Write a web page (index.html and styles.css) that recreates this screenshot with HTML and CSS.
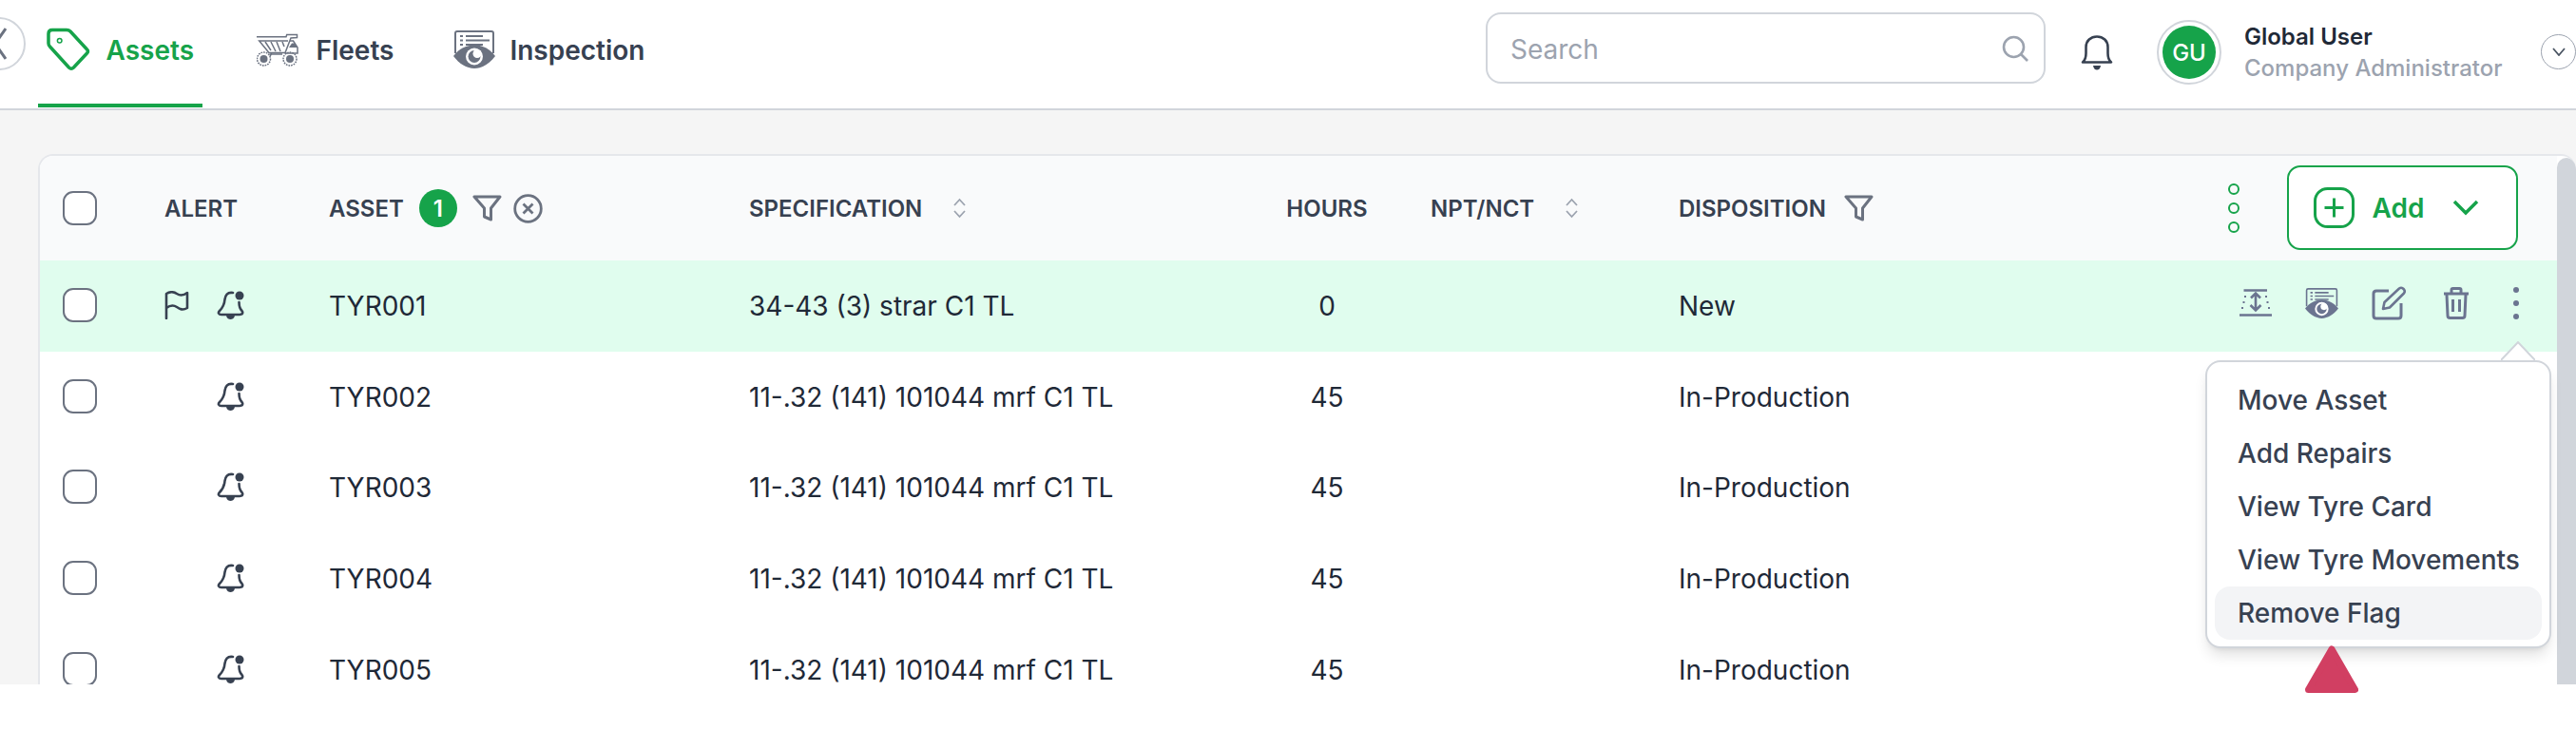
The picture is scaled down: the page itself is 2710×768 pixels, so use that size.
FILE: index.html
```html
<!DOCTYPE html>
<html lang="en">
<head>
<meta charset="utf-8">
<title>Assets</title>
<link rel="stylesheet" href="styles.css">
</head>
<body>
<svg class="defs" width="0" height="0" aria-hidden="true">
  <symbol id="inspect" viewBox="0 0 44 40">
    <path d="M2 24V3a2 2 0 0 1 2-2h36a2 2 0 0 1 2 2v21" fill="none" stroke="currentColor" stroke-width="2"/>
    <path d="M7 6h3M13 6h18M7 10.500h3M13 10.500h25M7 15h3M13 15h18" fill="none" stroke="currentColor" stroke-width="2"/>
    <path d="M0 27C6 19 14 15.500 22 15.500S38 19 44 27C38 35 30 40 22 40S6 35 0 27Z" fill="currentColor"/>
    <circle cx="22" cy="27.500" r="9" fill="#fff"/>
    <circle cx="22" cy="27.500" r="6.500" fill="currentColor"/>
    <circle cx="25" cy="24.500" r="4.500" fill="#fff"/>
  </symbol>
  <symbol id="filter" viewBox="0 0 31 28">
    <path d="M2 2H29L19.500 14V26L12.500 23V14Z" fill="none" stroke="currentColor" stroke-width="3" stroke-linejoin="round"/>
  </symbol>
  <symbol id="sort" viewBox="0 0 15 22">
    <path d="M2 8 7.500 2 13 8M2 14 7.500 20 13 14" fill="none" stroke="currentColor" stroke-width="1.800"/>
  </symbol>
  <symbol id="bell" viewBox="0 0 29 30">
    <path d="M17 2C11 1 9 5 8.500 9C8 15 6 18 3 21C1 23 2 25 5 25H24C27 25 28 23 26.500 21C24.500 19 23.500 17 23.500 12" fill="none" stroke="currentColor" stroke-width="2.600" stroke-linecap="round"/>
    <path d="M10 26H19C18.500 29 16 30 14.500 30S10.500 29 10 26Z" fill="currentColor"/>
    <circle cx="24" cy="5" r="4.500" fill="currentColor"/>
  </symbol>
</svg>

<header class="topbar">
  <button class="collapse" type="button" aria-label="Collapse">
    <svg class="collapse-x" viewBox="0 0 24 34"><path d="M1 1 23 33M23 1 1 33" fill="none" stroke="currentColor" stroke-width="3"/></svg>
  </button>
  <nav class="tabs">
    <a class="tab tab-active">
      <svg class="ico-tag" viewBox="0 0 48 48"><path d="M7 3.500H22Q24.500 3.500 26 5L43.500 24Q45.500 26 43.500 28L29.500 43Q27 45.500 24.500 43L4.500 21Q3 19.500 3 17.500V7.500Q3 3.500 7 3.500Z" fill="none" stroke="currentColor" stroke-width="3.500"/><circle cx="14.700" cy="14.700" r="2.300" fill="none" stroke="currentColor" stroke-width="1.500"/></svg>
      <span class="tab-label">Assets</span>
    </a>
    <a class="tab tab-fleets">
      <svg class="ico-truck" viewBox="0 0 44 35">
        <g fill="none" stroke="currentColor" stroke-width="1.500">
          <path d="M0 3.700 31 3.700 31.700 1.500H42.500V4.500L36 5 30 20.500H13L2.700 8H33"/>
          <path d="M9 9 15 18M15 9 20 19M21 9 25 19M27 9 29 14"/>
          <path d="M35 8H38.500L43 15V21H30"/>
          <path d="M13.500 22H27M16 21 14 24"/>
          <circle cx="7.500" cy="27" r="7" stroke-dasharray="1.700 1"/>
          <circle cx="35" cy="27" r="7" stroke-dasharray="1.700 1"/>
        </g>
        <path d="M34 15 37 10.500H39.500L43 15Z" fill="currentColor"/>
        <circle cx="7.500" cy="27" r="4" fill="currentColor"/>
        <circle cx="35" cy="27" r="4" fill="currentColor"/>
      </svg>
      <span class="tab-label">Fleets</span>
    </a>
    <a class="tab tab-inspect">
      <svg class="ico-inspect"><use href="#inspect"/></svg>
      <span class="tab-label">Inspection</span>
    </a>
  </nav>
  <div class="search">
    <span class="search-text">Search</span>
    <svg class="ico-search" viewBox="0 0 28 28"><circle cx="12.500" cy="12.500" r="10.500" fill="none" stroke="currentColor" stroke-width="2.600"/><path d="M20 20 27 27" fill="none" stroke="currentColor" stroke-width="2.600"/></svg>
  </div>
  <svg class="ico-bell" viewBox="0 0 34 37"><path d="M2 28.500C5 26 5.500 23 5.500 19V12.500C5.500 6 10.500 1.500 17 1.500S28.500 6 28.500 12.500V19C28.500 23 29 26 32 28.500Z" fill="none" stroke="currentColor" stroke-width="2.600" stroke-linejoin="round"/><path d="M13 32H21C20.500 35 19 36.500 17 36.500S13.500 35 13 32Z" fill="currentColor"/></svg>
  <div class="avatar"><span class="avatar-in">GU</span></div>
  <div class="user">
    <div class="user-name">Global User</div>
    <div class="user-role">Company Administrator</div>
  </div>
  <button class="user-menu" type="button" aria-label="User menu">
    <svg class="user-chev" viewBox="0 0 14 9"><path d="M1 1 7 8 13 1" fill="none" stroke="currentColor" stroke-width="1.800"/></svg>
  </button>
</header>

<main class="page">
  <section class="card">
    <div class="table">
      <div class="row row-head">
        <div class="cell cell-check"><span class="check"></span></div>
        <div class="cell">ALERT</div>
        <div class="cell gap-asset">
          <span>ASSET</span>
          <span class="badge">1</span>
          <svg class="ico-filter"><use href="#filter"/></svg>
          <svg class="ico-clear" viewBox="0 0 31 31"><circle cx="15.500" cy="15.500" r="13.800" fill="none" stroke="currentColor" stroke-width="2.800"/><path d="M10.500 10.500 20.500 20.500M20.500 10.500 10.500 20.500" fill="none" stroke="currentColor" stroke-width="2.800"/></svg>
        </div>
        <div class="cell gap-sort"><span>SPECIFICATION</span><svg class="ico-sort"><use href="#sort"/></svg></div>
        <div class="cell cell-center">HOURS</div>
        <div class="cell cell-npt gap-sort"><span>NPT/NCT</span><svg class="ico-sort"><use href="#sort"/></svg></div>
        <div class="cell gap-disp"><span>DISPOSITION</span><svg class="ico-filter"><use href="#filter"/></svg></div>
        <div class="cell cell-head-actions">
          <svg class="ico-dots" viewBox="0 0 14 52"><g fill="none" stroke="currentColor" stroke-width="2"><circle cx="7" cy="6" r="5"/><circle cx="7" cy="26" r="5"/><circle cx="7" cy="46" r="5"/></g></svg>
          <button class="add" type="button">
            <svg class="ico-plus" viewBox="0 0 43 43"><rect x="1.500" y="1.500" width="40" height="40" rx="13" fill="none" stroke="currentColor" stroke-width="3"/><path d="M21.500 11.500V31.500M11.500 21.500H31.500" fill="none" stroke="currentColor" stroke-width="3"/></svg>
            <span>Add</span>
            <svg class="ico-chev" viewBox="0 0 28 17"><path d="M2 2 14 14 26 2" fill="none" stroke="currentColor" stroke-width="3.500"/></svg>
          </button>
        </div>
      </div>

      <div class="row row-body row-selected">
        <div class="cell cell-check"><span class="check"></span></div>
        <div class="cell cell-alert">
          <svg class="ico-flag" viewBox="0 0 26 30"><path d="M2 29V3C7 0 10 1 13 3S20 5 24 2V18C19 21 16 19 13 17S6 15 2 18" fill="none" stroke="currentColor" stroke-width="2.600" stroke-linecap="round" stroke-linejoin="round"/></svg>
          <svg class="ico-rowbell"><use href="#bell"/></svg>
        </div>
        <div class="cell">TYR001</div>
        <div class="cell">34-43 (3) strar C1 TL</div>
        <div class="cell cell-center">0</div>
        <div class="cell"></div>
        <div class="cell">New</div>
        <div class="cell cell-actions">
          <svg class="ico-move" viewBox="0 0 34 29">
            <path d="M4.500 1.500H29M0 27.500H34" fill="none" stroke="currentColor" stroke-width="2.600"/>
            <path d="M17 5V22M12 9.500 17 4.500 22 9.500M11.500 17 17 22.500 22.500 17" fill="none" stroke="currentColor" stroke-width="2.600"/>
            <path d="M5 8h2M3.500 14h2M2 20h2M27 8h2M28.500 14h2M30 20h2" fill="none" stroke="currentColor" stroke-width="2"/>
          </svg>
          <svg class="ico-eye"><use href="#inspect"/></svg>
          <svg class="ico-edit" viewBox="0 0 36 36"><path d="M18 5H5Q2 5 2 8V31Q2 34 5 34H28Q31 34 31 31V18" fill="none" stroke="currentColor" stroke-width="3"/><path d="M12 24 13.500 17 29 2.500Q31 1 33 2.500L34 3.500Q35.500 5.500 34 7.500L19 22.500Z" fill="none" stroke="currentColor" stroke-width="2.600" stroke-linejoin="round"/></svg>
          <svg class="ico-trash" viewBox="0 0 36 34"><path d="M5 7H31M8 8 9 30Q9 32.500 11.500 32.500H24.500Q27 32.500 27 30L28 8M13 7V3Q13 1.500 14.500 1.500H21.500Q23 1.500 23 3V7M14.500 13V26M21.500 13V26" fill="none" stroke="currentColor" stroke-width="3"/></svg>
          <svg class="ico-kebab" viewBox="0 0 20 34"><circle cx="10" cy="3" r="3" fill="currentColor"/><circle cx="10" cy="17" r="3" fill="currentColor"/><circle cx="10" cy="31" r="3" fill="currentColor"/></svg>
        </div>
      </div>

      <div class="row row-body">
        <div class="cell cell-check"><span class="check"></span></div>
        <div class="cell cell-alert cell-noflag"><svg class="ico-rowbell"><use href="#bell"/></svg></div>
        <div class="cell">TYR002</div>
        <div class="cell">11-.32 (141) 101044 mrf C1 TL</div>
        <div class="cell cell-center">45</div>
        <div class="cell"></div>
        <div class="cell">In-Production</div>
        <div class="cell"></div>
      </div>
      <div class="row row-body">
        <div class="cell cell-check"><span class="check"></span></div>
        <div class="cell cell-alert cell-noflag"><svg class="ico-rowbell"><use href="#bell"/></svg></div>
        <div class="cell">TYR003</div>
        <div class="cell">11-.32 (141) 101044 mrf C1 TL</div>
        <div class="cell cell-center">45</div>
        <div class="cell"></div>
        <div class="cell">In-Production</div>
        <div class="cell"></div>
      </div>
      <div class="row row-body">
        <div class="cell cell-check"><span class="check"></span></div>
        <div class="cell cell-alert cell-noflag"><svg class="ico-rowbell"><use href="#bell"/></svg></div>
        <div class="cell">TYR004</div>
        <div class="cell">11-.32 (141) 101044 mrf C1 TL</div>
        <div class="cell cell-center">45</div>
        <div class="cell"></div>
        <div class="cell">In-Production</div>
        <div class="cell"></div>
      </div>
      <div class="row row-body">
        <div class="cell cell-check"><span class="check"></span></div>
        <div class="cell cell-alert cell-noflag"><svg class="ico-rowbell"><use href="#bell"/></svg></div>
        <div class="cell">TYR005</div>
        <div class="cell">11-.32 (141) 101044 mrf C1 TL</div>
        <div class="cell cell-center">45</div>
        <div class="cell"></div>
        <div class="cell">In-Production</div>
        <div class="cell"></div>
      </div>
    </div>
    <div class="scrollbar"></div>

    <div class="menu">
      <svg class="menu-caret" viewBox="0 0 36 20"><path d="M0 20 18 1 36 20" fill="#fff" stroke="#d1d5db" stroke-width="2"/></svg>
      <div class="menu-item">Move Asset</div>
      <div class="menu-item">Add Repairs</div>
      <div class="menu-item">View Tyre Card</div>
      <div class="menu-item">View Tyre Movements</div>
      <div class="menu-item menu-item-hover">Remove Flag</div>
    </div>
  </section>
</main>

<svg class="pointer" viewBox="0 0 56 50"><path d="M28 4 52.500 46.500H3.500Z" fill="#d13f62" stroke="#d13f62" stroke-width="7" stroke-linejoin="round"/></svg>
</body>
</html>
```

FILE: styles.css
```css
* { box-sizing: border-box; }
html, body { margin: 0; padding: 0; height: 768px; background: #fff; overflow: hidden; }
body { position: relative; font-family: "Inter", "Liberation Sans", sans-serif; color: #1f2937; }
svg { display: block; flex: none; }
.defs { position: absolute; }
button { font: inherit; padding: 0; background: none; cursor: pointer; }

/* top bar */
.topbar { height: 116px; display: flex; align-items: flex-start; border-bottom: 2px solid #d1d5db; background: #fff; }
.collapse { width: 56px; height: 56px; margin: 18px 0 0 -29px; border: 2px solid #d1d5db; border-radius: 50%; background: #fff; display: flex; align-items: center; justify-content: center; color: #6b7280; flex: none; }
.collapse-x { width: 24px; height: 34px; margin-right: 8px; }
.tabs { display: flex; gap: 47px; margin-left: 13px; flex: 1; height: 113px; }
.tab { display: flex; align-items: center; gap: 15.500px; padding: 0 10px 5px; height: 113px; border-bottom: 4px solid transparent; font-size: 28px; font-weight: 600; color: #374151; }
.tab-label { margin-top: 2px; }
.tab-active { color: #16a34a; border-bottom-color: #16a34a; width: 173px; }
.tab-fleets { gap: 18.500px; }
.tab-inspect { gap: 15px; margin-left: -4px; }
.ico-tag { width: 48px; height: 48px; margin-left: -2px; }
.ico-truck { width: 44px; height: 35px; color: #6b7280; }
.ico-inspect { width: 44px; height: 40px; color: #6b7280; }
.search { width: 589px; height: 75px; margin-top: 13px; border: 2px solid #d1d5db; border-radius: 16px; display: flex; align-items: center; justify-content: space-between; padding: 0 16px 0 24px; color: #9ca3af; font-size: 28px; }
.search-text { margin-top: 2px; }
.ico-search { width: 28px; height: 28px; }
.ico-bell { width: 34px; height: 37px; margin: 37px 0 0 37px; color: #374151; }
.avatar { width: 68px; height: 68px; margin: 21px 0 0 46px; border: 2px solid #d1d5db; border-radius: 50%; display: flex; align-items: center; justify-content: center; flex: none; }
.avatar-in { width: 56px; height: 56px; border-radius: 50%; background: #16a34a; color: #fff; font-size: 24px; font-weight: 500; display: flex; align-items: center; justify-content: center; }
.user { margin: 22px 0 0 24px; width: 270px; font-size: 24px; line-height: 33px; white-space: nowrap; }
.user-name { font-weight: 600; color: #1f2937; }
.user-role { font-weight: 500; color: #9ca3af; }
.user-menu { width: 37px; height: 37px; margin: 36px 0 0 42px; border: 1.500px solid #9ca3af; border-radius: 50%; display: flex; align-items: center; justify-content: center; color: #4b5563; flex: none; }
.user-chev { width: 14px; height: 9px; }

/* page and table */
.page { height: 604px; padding: 46px 0 0 40px; background: #f5f5f5; overflow: hidden; }
.card { position: relative; display: flex; height: 600px; border: 2px solid #e5e7eb; border-width: 2px 0 0 2px; border-radius: 16px 16px 0 0; background: #fff; overflow: hidden; }
.table { flex: 1; min-width: 0; }
.scrollbar { width: 20px; flex: none; margin-top: 2px; background: #d1d5db; border-radius: 10px 10px 0 0; }
.row { display: grid; grid-template-columns: 131px 173px 442px 520px 176px 282px 566px 358px; align-items: center; }
.row-head { height: 110px; background: #f9fafb; font-size: 24px; font-weight: 600; color: #374151; }
.row-body { height: 95.750px; font-size: 28px; line-height: 30px; font-weight: 400; color: #1f2937; }
.row-selected { background: #e0fdee; }
.cell { display: flex; align-items: center; white-space: nowrap; min-width: 0; }
.cell-check { padding-left: 24px; }
.check { width: 36px; height: 36px; border: 2.500px solid #6b7280; border-radius: 11px; background: #fff; display: block; }
.row-body .check { margin-top: -2px; }
.cell-center { justify-content: center; }
.cell-npt { padding-left: 21px; }
.gap-asset { gap: 16px; }
.gap-asset .ico-clear { margin-left: -4px; }
.gap-sort { gap: 32px; }
.gap-disp { gap: 19px; }
.badge { width: 40px; height: 40px; border-radius: 50%; background: #16a34a; color: #fff; display: flex; align-items: center; justify-content: center; font-size: 24px; font-weight: 600; }
.ico-filter { width: 31px; height: 28px; color: #6b7280; }
.ico-clear { width: 31px; height: 31px; color: #6b7280; }
.ico-sort { width: 15px; height: 22px; color: #9ca3af; }
.cell-head-actions { padding-left: 11px; gap: 49px; color: #16a34a; }
.ico-dots { width: 14px; height: 52px; }
.add { width: 243px; height: 89px; border: 2.500px solid #16a34a; border-radius: 14px; background: #fff; color: #16a34a; font-size: 28px; font-weight: 600; display: flex; align-items: center; padding: 0 0 0 26px; margin-top: -1px; }
.ico-plus { width: 43px; height: 43px; margin-right: 18.500px; }
.ico-chev { width: 28px; height: 17px; margin-left: 29.500px; }
.cell-alert { gap: 29px; color: #374151; margin-top: -2px; }
.cell-noflag { padding-left: 55px; }
.ico-flag { width: 26px; height: 30px; }
.ico-rowbell { width: 29px; height: 30px; }
.cell-actions { padding-left: 24px; gap: 35px; color: #6b7490; margin-top: -6px; }
.ico-move { width: 34px; height: 29px; }
.ico-eye { width: 35px; height: 32px; }
.ico-edit { width: 36px; height: 36px; }
.ico-trash { width: 36px; height: 34px; }
.ico-kebab { width: 20px; height: 34px; }

/* dropdown */
.menu { position: absolute; left: 2278px; top: 215px; width: 364px; height: 303px; padding: 12px 8px 8px; background: #fff; border: 2px solid #d1d5db; border-radius: 16px; box-shadow: 0 10px 15px -3px rgba(0, 0, 0, .12), 0 4px 6px -4px rgba(0, 0, 0, .1); }
.menu-caret { position: absolute; left: 309px; top: -22px; width: 36px; height: 20px; }
.menu-item { height: 56px; padding-left: 24px; border-radius: 16px; display: flex; align-items: center; font-size: 28px; font-weight: 500; color: #374151; white-space: nowrap; }
.menu-item-hover { background: #f3f4f6; }

/* overlay marker */
.pointer { position: absolute; left: 2425px; top: 679px; width: 56px; height: 50px; }
```
